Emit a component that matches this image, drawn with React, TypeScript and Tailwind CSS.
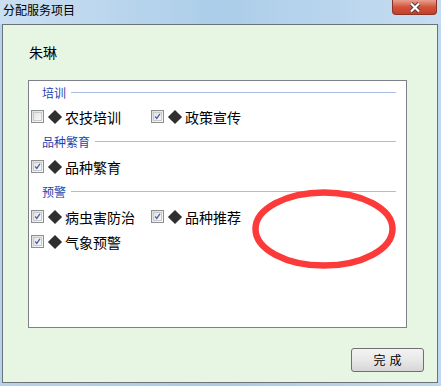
import React from "react";

const FONT = { fontFamily: '"Noto Sans CJK SC", "Noto Sans", sans-serif' };

type Item = { label: string; checked: boolean };

const GROUPS: { title: string; rows: Item[][] }[] = [
  {
    title: "培训",
    rows: [
      [
        { label: "农技培训", checked: false },
        { label: "政策宣传", checked: true },
      ],
    ],
  },
  {
    title: "品种繁育",
    rows: [[{ label: "品种繁育", checked: true }]],
  },
  {
    title: "预警",
    rows: [
      [
        { label: "病虫害防治", checked: true },
        { label: "品种推荐", checked: true },
      ],
      [{ label: "气象预警", checked: true }],
    ],
  },
];

const CheckBox = ({ checked }: { checked: boolean }) => (
  <span className="w-[13px] h-[13px] shrink-0 border border-[#8e8f8f] bg-gradient-to-br from-[#dcdcdc] to-[#fbfbfb] flex items-center justify-center">
    <span className="w-[9px] h-[9px] border border-[#c9c9c9] bg-gradient-to-br from-[#e4e4e4] to-[#f8f8f8] flex items-center justify-center">
      {checked && (
        <svg width="9" height="9" viewBox="0 0 9 9">
          <path
            d="M1.5 4.5 L3.6 7 L7.6 1.2"
            fill="none"
            stroke="#4660a8"
            strokeWidth="1.6"
          />
        </svg>
      )}
    </span>
  </span>
);

const CheckItem = ({ item }: { item: Item }) => (
  <div className="w-[120px] flex items-center">
    <CheckBox checked={item.checked} />
    {/* diamond bullet */}
    <span className="ml-[4px] w-[14px] h-[14px] shrink-0 flex items-center justify-center">
      <span className="w-[10px] h-[10px] rotate-45 bg-[#2f2f2f]" />
    </span>
    <span className="ml-[3px] text-[14px] text-black leading-none">
      {item.label}
    </span>
  </div>
);

const CloseButton = () => (
  <div className="w-[45px] h-[15px] rounded-b-[4px] border border-t-0 border-[#8a3326] bg-gradient-to-b from-[#e7a08f] via-[#d2533b] to-[#c53f26] flex items-center justify-center">
    <svg width="14" height="11" viewBox="0 0 14 11">
      <path d="M3 1.5 L11 9.5 M11 1.5 L3 9.5" stroke="#5a3a36" strokeWidth="4" />
      <path d="M3 1.5 L11 9.5 M11 1.5 L3 9.5" stroke="#fff" strokeWidth="2.2" />
    </svg>
  </div>
);

export default function App() {
  return (
    <div
      className="w-[441px] h-[386px] flex flex-col bg-gradient-to-r from-[#b6d2ec] via-[#a9cbe8] to-[#bfd8ef] overflow-hidden"
      style={FONT}
    >
      <div className="h-[24px] shrink-0 flex items-start justify-between bg-gradient-to-r from-[#cadff2] via-[#abcde9] to-[#c6ddf1]">
        <span className="ml-[3px] mt-[3px] text-[12px] leading-[14px] text-black">
          分配服务项目
        </span>
        <div className="mr-[4px]">
          <CloseButton />
        </div>
      </div>

      <div className="flex-1 ml-[2px] mr-[3px] mb-[3px] border border-[#6d7278] bg-[#e7f5e3] flex flex-col">
        <div className="ml-[26px] mt-[17px] text-[14px] leading-[20px] text-black">
          朱琳
        </div>

        <div className="relative ml-[25px] mt-[18px] w-[379px] h-[248px] border border-[#7b8089] bg-white flex flex-col">
          {GROUPS.map((g, gi) => (
            <React.Fragment key={g.title}>
              <div
                className={`${gi === 0 ? "h-[23px]" : "h-[25px]"} flex items-center pl-[13px] pr-[10px]`}
              >
                <span className="text-[12px] leading-none text-[#1f3fae]">
                  {g.title}
                </span>
                <span className="flex-1 ml-[5px] h-px bg-[#a9bce4]" />
              </div>
              {g.rows.map((row, ri) => (
                <div key={ri} className="h-[25px] flex items-center pl-[2px]">
                  {row.map((it) => (
                    <CheckItem key={it.label} item={it} />
                  ))}
                </div>
              ))}
            </React.Fragment>
          ))}

          <svg
            className="absolute left-[223px] top-[108px]"
            width="144"
            height="80"
            viewBox="0 0 144 80"
          >
            <ellipse
              cx="72"
              cy="40"
              rx="68.5"
              ry="36.5"
              fill="none"
              stroke="#fd3a3a"
              strokeWidth="6.5"
            />
          </svg>
        </div>

        <div className="flex justify-end mt-[20px] mr-[13px]">
          <button className="w-[73px] h-[24px] rounded-[3px] border border-[#707070] bg-gradient-to-b from-[#f3f3f3] via-[#e8e8e8] to-[#d6d6d6] text-[12px] leading-none text-black tracking-[4px] pl-[4px]">
            完成
          </button>
        </div>
      </div>
    </div>
  );
}
